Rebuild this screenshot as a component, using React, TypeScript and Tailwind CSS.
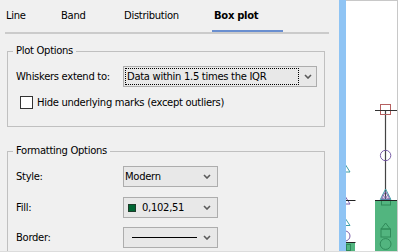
import React from "react";

function Chevron() {
  return (
    <svg width="8" height="5" viewBox="0 0 8 5" className="shrink-0">
      <path d="M1 1 L4 4 L7 1" fill="none" stroke="#5a5a5a" strokeWidth="1.6" />
    </svg>
  );
}

function Tab({ label, w, pl, active }: { label: string; w: string; pl: string; active?: boolean }) {
  return (
    <div
      className={`${w} ${pl} h-[32px] pt-[2px] flex items-center border-b-2 ${
        active ? "border-[#6a8fd0] font-bold" : "border-transparent"
      }`}
    >
      {label}
    </div>
  );
}

function Chart() {
  const teal = "#3f9ea6";
  const purple = "#7a5ea8";
  const dg = "#2f8a59";
  return (
    <svg width="51" height="250" viewBox="0 0 51 250" className="block">
      {/* left partial marks */}
      <polygon points="-1,163 -6,171 4,171" fill="none" stroke={teal} strokeWidth="1" />
      <polygon points="-1,195 -6,203 4,203" fill="none" stroke={purple} strokeWidth="1" />
      <line x1="0" y1="199.5" x2="9.5" y2="199.5" stroke="#222" strokeWidth="1" />
      <polygon points="-1,217 -6,224.5 4,224.5" fill="none" stroke={teal} strokeWidth="1" />
      <circle cx="-1" cy="235" r="5" fill="none" stroke={purple} strokeWidth="1" />
      <rect x="0" y="241" width="9" height="10" fill="#52b57f" />
      <line x1="0" y1="241.5" x2="9.5" y2="241.5" stroke="#222" strokeWidth="1" />
      <rect x="0.5" y="243.5" width="4" height="6" fill="none" stroke={dg} strokeWidth="1" />

      {/* main whisker */}
      <line x1="39.5" y1="109.5" x2="39.5" y2="199" stroke="#444" strokeWidth="1.2" />
      <rect x="34.5" y="103.5" width="10" height="10" fill="none" stroke="#b56060" strokeWidth="1" />
      <line x1="29" y1="109.5" x2="51" y2="109.5" stroke="#333" strokeWidth="1" />
      <circle cx="39.6" cy="154.5" r="5.2" fill="none" stroke={purple} strokeWidth="1" />

      {/* box */}
      <rect x="29" y="199" width="22" height="52" fill="#52b57f" />
      <polygon points="39.6,188 34.3,198.5 44.9,198.5" fill="none" stroke={teal} strokeWidth="1" />
      <polygon points="39.6,190.5 35.5,198 43.7,198" fill="none" stroke={purple} strokeWidth="0.9" />
      <line x1="36" y1="194" x2="43" y2="198" stroke={purple} strokeWidth="0.7" />
      <line x1="43" y1="194" x2="36" y2="198" stroke={purple} strokeWidth="0.7" />
      <rect x="35.5" y="199.5" width="9" height="4.5" fill="none" stroke={dg} strokeWidth="1" />
      <line x1="29" y1="199.5" x2="51" y2="199.5" stroke="#222" strokeWidth="1" />
      <polygon points="39.6,222 35,228 44.2,228" fill="none" stroke={dg} strokeWidth="1" />
      <rect x="35" y="228" width="9.5" height="8" fill="none" stroke={dg} strokeWidth="1" />
      <circle cx="39.6" cy="243" r="5.4" fill="none" stroke={dg} strokeWidth="1" />
    </svg>
  );
}

export default function App() {
  return (
    <div className="w-[398px] h-[252px] flex bg-[#f0f0f0] overflow-hidden border-b border-[#dcdcdc] text-black text-[10px] leading-[12px] tracking-[-0.3px] font-['DejaVu_Sans',sans-serif]">
      {/* left settings panel */}
      <div className="w-[339px] shrink-0 flex flex-col">
        <div className="ml-[5px] w-[324px] h-[34px] shrink-0 flex border-b-2 border-[#cbcbcb]">
          <Tab label="Line" w="w-[54px]" pl="pl-[1px]" />
          <Tab label="Band" w="w-[63px]" pl="pl-[2px]" />
          <Tab label="Distribution" w="w-[90px]" pl="pl-[2px]" />
          <Tab label="Box plot" w="w-[71px]" pl="pl-[2px]" active />
        </div>

        <fieldset className="mt-[11px] ml-[7px] w-[318px] shrink-0 border border-[#c0c0c0] pb-[17px]">
          <legend className="ml-[5px] px-[3px] leading-[12px]">Plot Options</legend>
          <div className="mt-[9px] flex items-center h-[21px] pl-[8px]">
            <span className="w-[107px] shrink-0">Whiskers extend to:</span>
            <div className="w-[194px] h-[21px] shrink-0 flex items-center border border-[#adadad] bg-[#e8e8e8]">
              <div className="ml-[1px] w-[174px] h-[17px] flex items-center border border-dotted border-black pl-[1px]">
                Data within 1.5 times the IQR
              </div>
              <div className="flex-1 flex justify-center">
                <Chevron />
              </div>
            </div>
          </div>
          <div className="mt-[9px] flex items-center h-[13px] pl-[12px]">
            <div className="w-[13px] h-[13px] shrink-0 border border-[#333333] bg-white" />
            <span className="ml-[4px]">Hide underlying marks (except outliers)</span>
          </div>
        </fieldset>

        <fieldset className="mt-[18px] ml-[7px] w-[318px] h-[200px] shrink-0 border border-[#c0c0c0]">
          <legend className="ml-[5px] px-[3px] leading-[12px]">Formatting Options</legend>
          <div className="mt-[9px] flex items-center h-[21px] pl-[8px]">
            <span className="w-[107px] shrink-0">Style:</span>
            <div className="w-[95px] h-[21px] shrink-0 flex items-center border border-[#adadad] bg-[#e8e8e8] pl-[1px] pr-[6px]">
              <span className="flex-1">Modern</span>
              <Chevron />
            </div>
          </div>
          <div className="mt-[10px] flex items-center h-[21px] pl-[8px]">
            <span className="w-[107px] shrink-0">Fill:</span>
            <div className="w-[95px] h-[21px] shrink-0 flex items-center border border-[#adadad] bg-[#e8e8e8] pl-[4px] pr-[6px]">
              <span className="w-[8px] h-[8px] shrink-0 bg-[#006633] border border-[#1d3d2a]" />
              <span className="flex-1 ml-[6px]">0,102,51</span>
              <Chevron />
            </div>
          </div>
          <div className="mt-[9px] flex items-center h-[21px] pl-[8px]">
            <span className="w-[107px] shrink-0">Border:</span>
            <div className="w-[95px] h-[21px] shrink-0 flex items-center border border-[#adadad] bg-[#e8e8e8] pl-[8px] pr-[6px]">
              <span className="w-[65px] h-px bg-black shrink-0" />
              <span className="flex-1" />
              <Chevron />
            </div>
          </div>
        </fieldset>
      </div>

      {/* splitter */}
      <div className="w-[7px] shrink-0 bg-[#8fc4f4]" />

      {/* chart area */}
      <div className="w-[52px] shrink-0 bg-white border-t border-r border-[#c8c8c8]">
        <Chart />
      </div>
    </div>
  );
}
